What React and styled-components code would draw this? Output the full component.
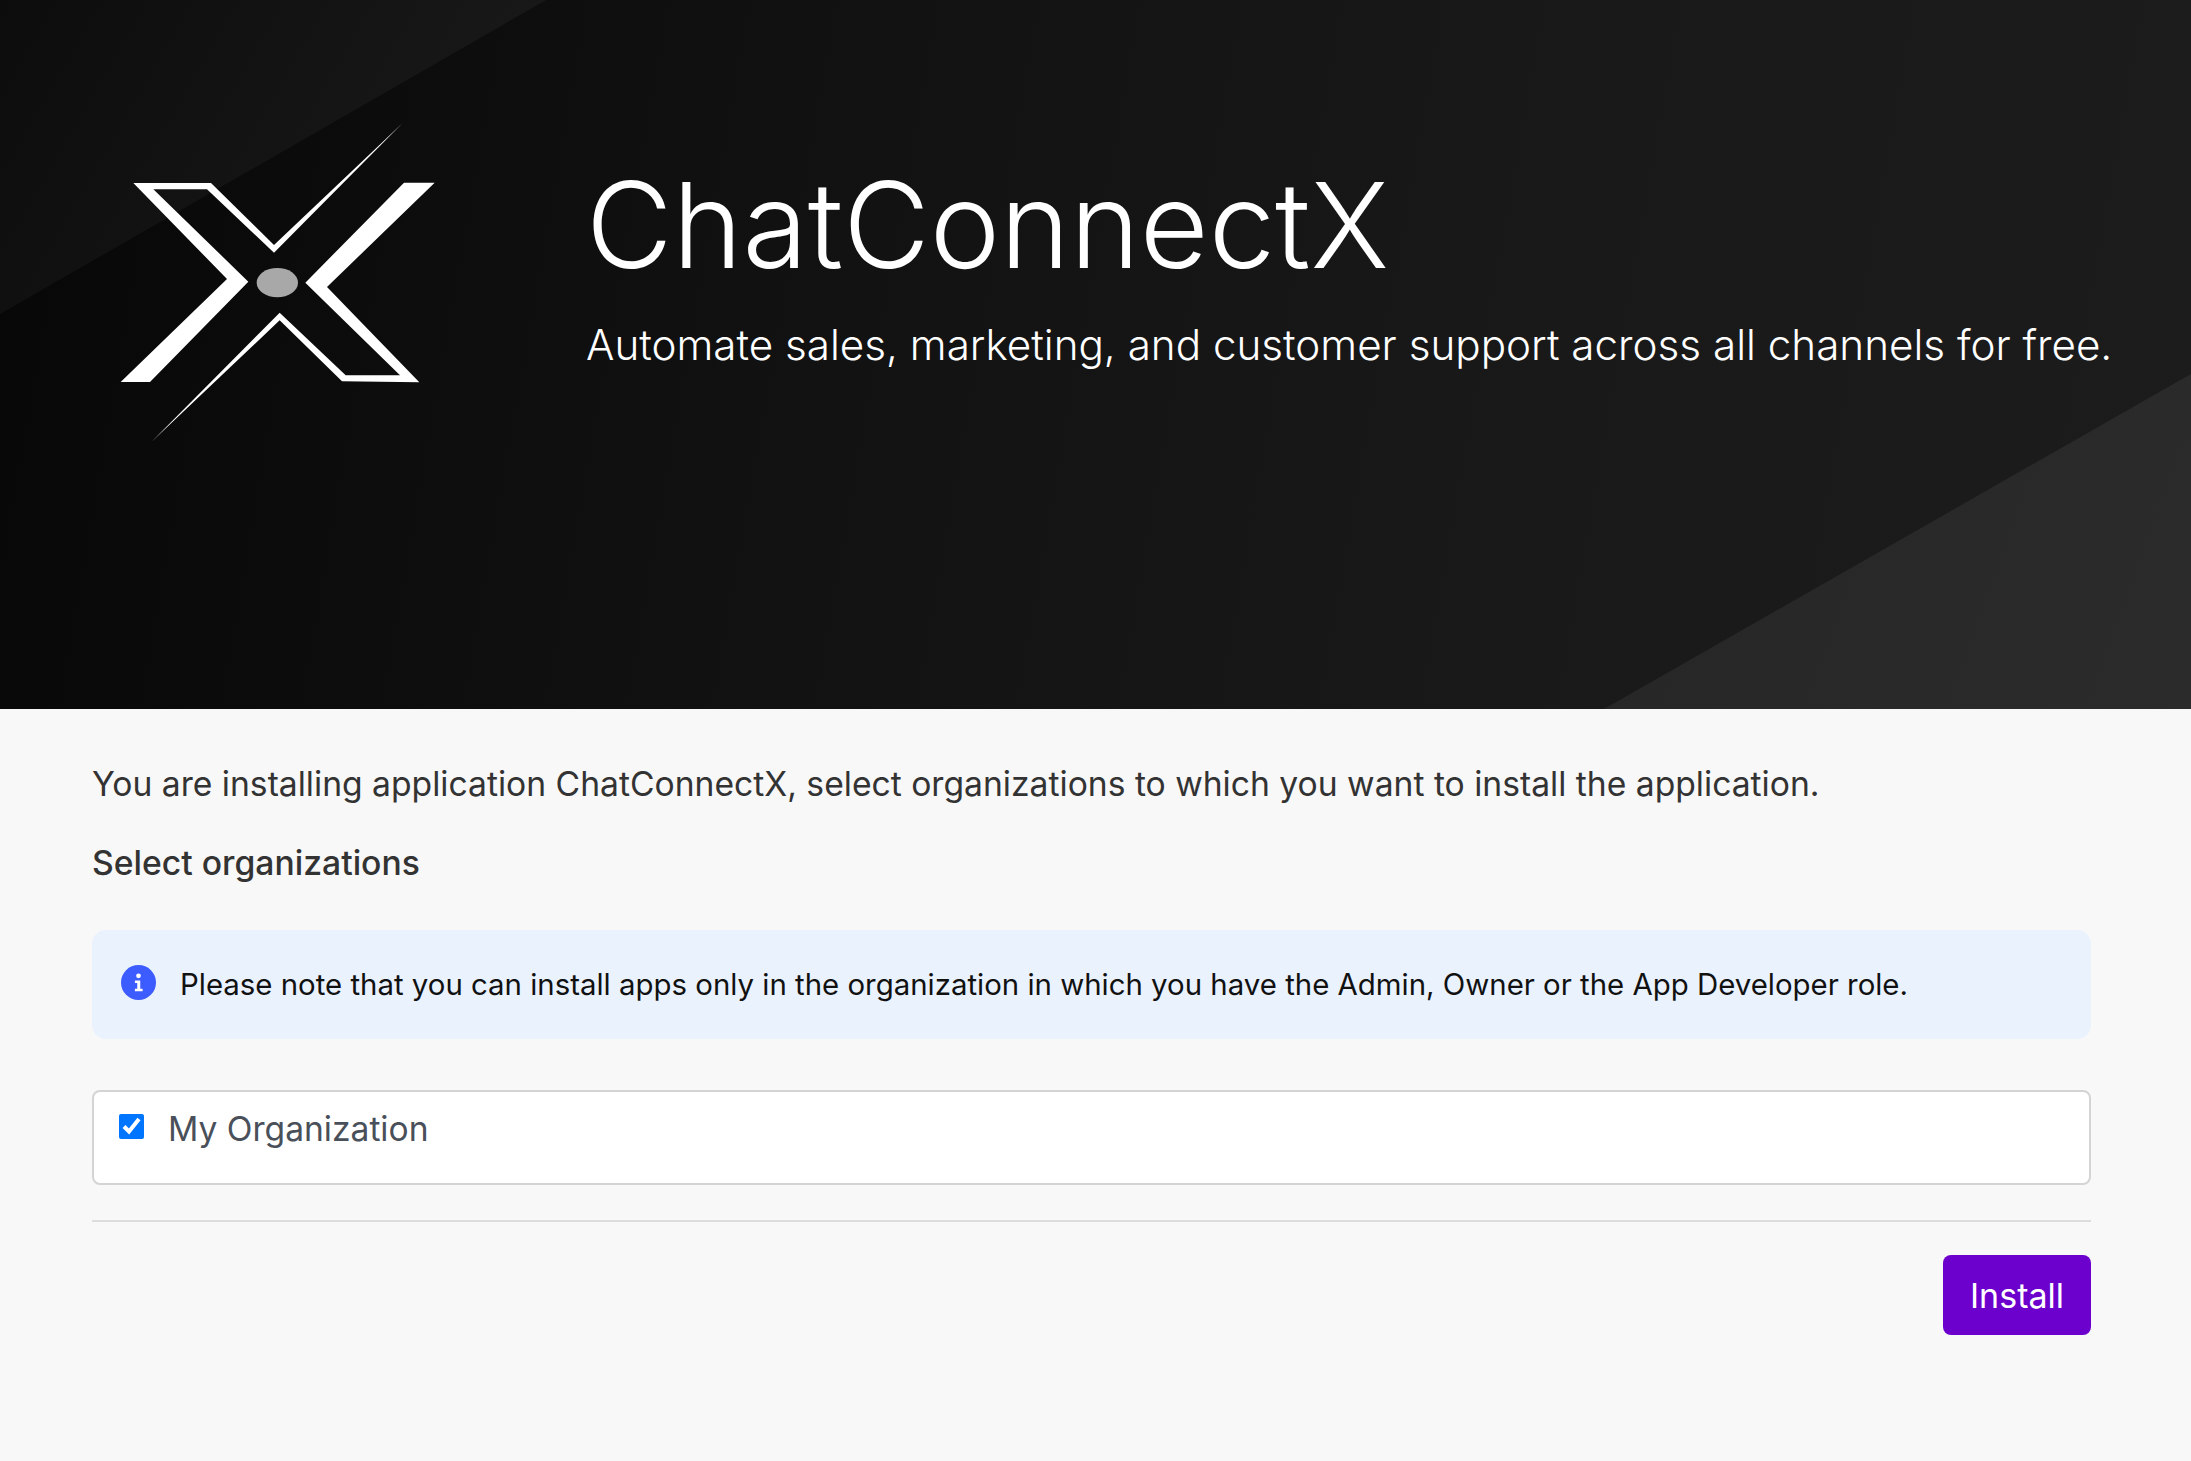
import React from "react";
import styled, { createGlobalStyle } from "styled-components";

const GlobalStyle = createGlobalStyle`
  html, body {
    margin: 0;
    padding: 0;
    background: #f8f8f8;
    font-family: Inter, "Liberation Sans", sans-serif;
  }
`;

const Page = styled.div`
  min-height: 1461px;
  background: #f8f8f8;
`;

const Hero = styled.header`
  position: relative;
  height: 709px;
  overflow: hidden;
  background: linear-gradient(100deg, #070707 0%, #111111 35%, #191919 70%, #1c1c1c 100%);
  display: flex;
  align-items: flex-start;

  /* lighter wedge top left */
  &::before {
    content: "";
    position: absolute;
    top: 0;
    left: 0;
    width: 546px;
    height: 314px;
    clip-path: polygon(0 0, 100% 0, 0 100%);
    background: linear-gradient(120deg, #0c0c0c 0%, #1c1c1c 100%);
  }

  /* lighter wedge bottom right */
  &::after {
    content: "";
    position: absolute;
    right: 0;
    bottom: 0;
    width: 587px;
    height: 335px;
    clip-path: polygon(100% 0, 100% 100%, 0 100%);
    background: linear-gradient(110deg, #262626 0%, #2b2b2b 100%);
  }
`;

const LogoWrap = styled.div`
  position: relative;
  z-index: 1;
  flex: none;
  width: 400px;
  height: 360px;
  margin: 100px 0 0 80px;
`;

const HeroText = styled.div`
  position: relative;
  z-index: 1;
  margin: 145px 0 0 106px;
  color: #ffffff;
`;

const AppName = styled.h1`
  margin: 0;
  font-size: 118.8px;
  font-weight: 300;
  line-height: 160px;
`;

const Tagline = styled.p`
  margin: 12px 0 0;
  font-size: 42.2px;
  font-weight: 300;
  line-height: 56px;
  white-space: nowrap;
`;

const Content = styled.main`
  padding: 50px 100px 0 92px;
`;

const Intro = styled.p`
  margin: 0;
  font-size: 33.65px;
  line-height: 50px;
  color: #333333;
`;

const SectionTitle = styled.h2`
  margin: 29px 0 0;
  font-size: 33.7px;
  font-weight: 500;
  line-height: 50px;
  color: #333333;
`;

const Notice = styled.div`
  display: flex;
  align-items: center;
  gap: 24px;
  height: 109px;
  margin-top: 42px;
  padding: 0 29px;
  box-sizing: border-box;
  border-radius: 14px;
  background: #eaf2fe;
  font-size: 29.4px;
  color: #111111;
`;

const NoticeIcon = styled.svg`
  flex: none;
  width: 35px;
  height: 35px;
  margin-top: -4px;
`;

const OrgBox = styled.label`
  display: flex;
  align-items: flex-start;
  gap: 24px;
  height: 95px;
  margin-top: 51px;
  padding: 22px 25px 0;
  box-sizing: border-box;
  border: 2px solid #d4d4d4;
  border-radius: 8px;
  background: #ffffff;
  font-size: 33.6px;
  line-height: 30px;
  color: #4a5059;
`;

const OrgCheck = styled.input`
  flex: none;
  width: 25px;
  height: 25px;
  margin: 0;
  accent-color: #0075ff;
`;

const Divider = styled.hr`
  height: 2px;
  margin: 35px 0 0;
  border: 0;
  background: #dddddd;
`;

const Actions = styled.div`
  display: flex;
  justify-content: flex-end;
  margin-top: 33px;
`;

const InstallButton = styled.button`
  width: 148px;
  height: 80px;
  border: 0;
  border-radius: 8px;
  background: #6c00cc;
  color: #ffffff;
  font-family: inherit;
  font-size: 34px;
`;

const Logo = () => (
  <svg width="400" height="360" viewBox="0 0 1200 1080" aria-hidden="true">
    <path d="M160 249H393L582 435L968 69L582 458L381 268H220L505 545L210 846H122L441 537Z" fill="#fff" fillRule="evenodd" />
    <path d="M972 248H1064L741 561L1018 847L786 844L599 661L214 1026L599 638L797 826H960L676 548Z" fill="#fff" />
    <ellipse cx="592" cy="548" rx="62" ry="44" fill="#a8a8a8" />
  </svg>
);

const InfoIcon = () => (
  <NoticeIcon viewBox="0 0 34 34" aria-hidden="true">
    <circle cx="17" cy="17" r="17" fill="#3d5cff" />
    <circle cx="17" cy="10.5" r="2.3" fill="#fff" />
    <path d="M13.5 15h5.2v8h2.3v2.6h-7.5V23h2.3v-5.4h-2.3z" fill="#fff" />
  </NoticeIcon>
);

const App = () => {
  return (
    <Page>
      <GlobalStyle />
      <Hero>
        <LogoWrap>
          <Logo />
        </LogoWrap>
        <HeroText>
          <AppName>ChatConnectX</AppName>
          <Tagline>Automate sales, marketing, and customer support across all channels for free.</Tagline>
        </HeroText>
      </Hero>
      <Content>
        <Intro>You are installing application ChatConnectX, select organizations to which you want to install the application.</Intro>
        <SectionTitle>Select organizations</SectionTitle>
        <Notice>
          <InfoIcon />
          <span>Please note that you can install apps only in the organization in which you have the Admin, Owner or the App Developer role.</span>
        </Notice>
        <OrgBox>
          <OrgCheck type="checkbox" defaultChecked />
          My Organization
        </OrgBox>
        <Divider />
        <Actions>
          <InstallButton>Install</InstallButton>
        </Actions>
      </Content>
    </Page>
  );
};

export default App;
